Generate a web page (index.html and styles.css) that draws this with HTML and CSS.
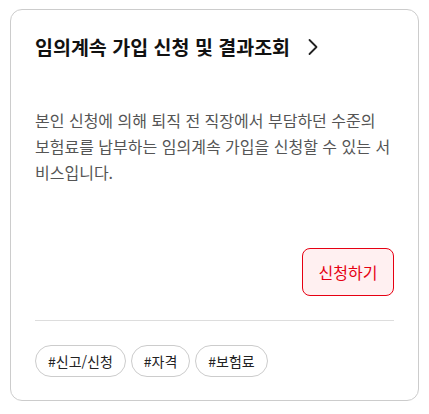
FILE: index.html
```html
<!DOCTYPE html>
<html lang="ko">
<head>
    <meta charset="UTF-8">
    <meta name="viewport" content="width=device-width, initial-scale=1.0">
    <title>임의계속 가입 신청 및 결과조회</title>
    <link rel="stylesheet" href="styles.css">
</head>
<body>
    <div class="service-card">
        <a href="#" class="card-title">
            <span>임의계속 가입 신청 및 결과조회</span>
            <svg class="chevron" width="12" height="18" viewBox="0 0 12 18" fill="none">
                <path d="M2.5 2l7 7-7 7" stroke="#222" stroke-width="1.8" stroke-linecap="round" stroke-linejoin="round"/>
            </svg>
        </a>

        <p class="card-description">본인 신청에 의해 퇴직 전 직장에서 부담하던 수준의 보험료를 납부하는 임의계속 가입을 신청할 수 있는 서비스입니다.</p>

        <div class="card-actions">
            <a href="#" class="apply-btn">신청하기</a>
        </div>

        <div class="tag-list">
            <span class="tag">#신고/신청</span>
            <span class="tag">#자격</span>
            <span class="tag">#보험료</span>
        </div>
    </div>
</body>
</html>
```

FILE: styles.css
```css
:root {
    --text-primary: #111111;
    --text-secondary: #555555;
    --border-color: #cccccc;
    --divider-color: #dddddd;
    --accent-color: #e60012;
    --accent-light: #fff0f1;
}

* {
    margin: 0;
    padding: 0;
    box-sizing: border-box;
}

body {
    font-family: 'Noto Sans CJK KR', 'Noto Sans', sans-serif;
    background-color: #ffffff;
    color: var(--text-primary);
    padding: 9px 10px;
}

.service-card {
    width: 409px;
    height: 392px;
    border: 1px solid var(--border-color);
    border-radius: 12px;
    padding: 22px 24px 0 24px;
    display: flex;
    flex-direction: column;
}

.card-title {
    display: flex;
    align-items: center;
    gap: 17px;
    color: var(--text-primary);
    text-decoration: none;
    font-size: 19.5px;
    font-weight: 700;
    line-height: 30px;
}

.card-description {
    margin-top: 45px;
    font-size: 16px;
    line-height: 26px;
    color: var(--text-secondary);
    word-break: break-all;
}

.card-actions {
    margin-top: auto;
    display: flex;
    justify-content: flex-end;
    padding-bottom: 24px;
    border-bottom: 1px solid var(--divider-color);
}

.apply-btn {
    display: inline-flex;
    align-items: center;
    justify-content: center;
    width: 92px;
    height: 48px;
    border: 1px solid var(--accent-color);
    border-radius: 8px;
    background-color: var(--accent-light);
    color: var(--accent-color);
    text-decoration: none;
    font-size: 16px;
}

.tag-list {
    display: flex;
    gap: 5px;
    padding: 24px 0 23px;
}

.tag {
    display: inline-flex;
    align-items: center;
    height: 32px;
    padding: 0 12px;
    border: 1px solid var(--border-color);
    border-radius: 16px;
    font-size: 14px;
    color: #222222;
}
```
